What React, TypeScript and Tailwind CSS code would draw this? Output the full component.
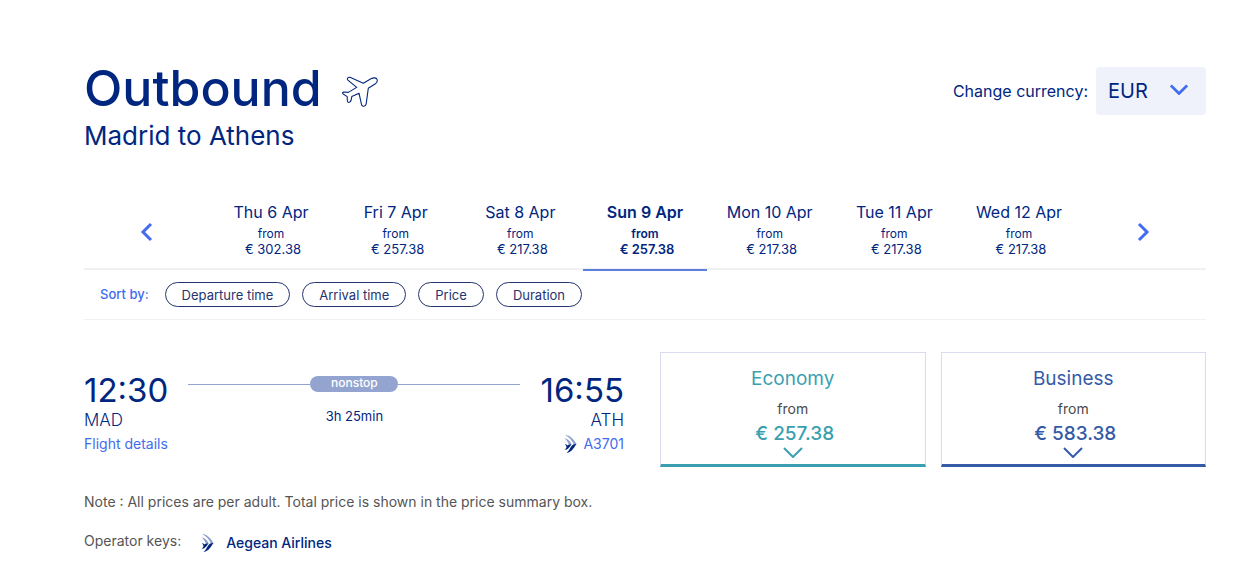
import { useState } from 'react';

interface Fare {
  name: string;
  price: string;
  className: string;
}

const days = [
  { label: 'Thu 6 Apr', price: '302.38' },
  { label: 'Fri 7 Apr', price: '257.38' },
  { label: 'Sat 8 Apr', price: '217.38' },
  { label: 'Sun 9 Apr', price: '257.38' },
  { label: 'Mon 10 Apr', price: '217.38' },
  { label: 'Tue 11 Apr', price: '217.38' },
  { label: 'Wed 12 Apr', price: '217.38' },
];

const sortOptions = ['Departure time', 'Arrival time', 'Price', 'Duration'];

const fares: Fare[] = [
  { name: 'Economy', price: '257.38', className: 'border-b-[#3a9fb0] text-[#3a9fb0]' },
  { name: 'Business', price: '583.38', className: 'border-b-[#355ba8] text-[#355ba8]' },
];

const PlaneIcon = () => (
  <svg width="36" height="32" viewBox="0 0 36 32" fill="none" stroke="#00267f" strokeWidth="1.1" strokeLinejoin="round" aria-hidden="true">
    <path d="M5.6 3.8C4.8 2.6 6.2 1 8 1.3L21.3 7.3L29.4 2.6C31.5 1.4 34.3 1.6 35 3.4C35.6 5 34.8 6.8 33.4 7.8L26.3 12.2L24.2 27.6C24 29.2 22.6 30.6 21.2 30.2C19.8 30 19.4 28.8 19.3 27.6L17 17.2L9.8 20.6L9.2 24C8.8 25.4 7.8 26.6 6.6 26.5C5.4 26.4 5.4 25 5.3 24L5.2 20.6L1.2 18C0.2 17.2 0.4 16 1.8 16L6.3 16.4L14.7 11.4Z" />
  </svg>
);

const AirlineLogo = () => (
  <svg width="13" height="18" viewBox="0 0 13 18" aria-hidden="true">
    <path d="M1 0C6 .2 9.4 4 12.6 9L9.8 9.2C7.8 5.2 5 1.8 1 0Z" fill="#8fa0cf" />
    <path d="M.4 3.2C4 3.6 6 6.2 7.6 9.2L5 9.4C3.8 7 2.4 4.8.4 3.2Z" fill="#8fa0cf" />
    <path d="M12.6 9C10.4 11.6 8.4 17 2.6 18C5.6 15.8 6.2 11 9.8 9.2Z" fill="#00267f" />
    <path d="M7.6 9.2C6.2 11 4.6 14.4.6 15C2.6 13.6 2.4 10.4 5 9.4Z" fill="#00267f" />
    <path d="M1 9C2.2 9.2 3.2 10 4 11L2.8 12.6C2.4 11.2 1.8 10 1 9Z" fill="#00267f" />
  </svg>
);

const DownIcon = ({ className }: { className: string }) => (
  <svg className={className} viewBox="0 0 20 11" fill="none" stroke="currentColor" aria-hidden="true">
    <path d="M1 1L10 10L19 1" />
  </svg>
);

const SideIcon = ({ path }: { path: string }) => (
  <svg width="13" height="20" viewBox="0 0 13 20" fill="none" stroke="#416cf0" strokeWidth="3" aria-hidden="true">
    <path d={path} />
  </svg>
);

const App = () => {
  const [selectedDay, setSelectedDay] = useState(3);
  const [currency, setCurrency] = useState('EUR');

  return (
    <main className="bg-white pt-15 pr-12 pl-21 font-[Inter,'Liberation_Sans',sans-serif] text-[#00267f]">
      <header className="flex items-start justify-between">
        <div>
          <div className="flex items-center gap-5">
            <h1 className="text-[50px] leading-[56px] font-medium">Outbound</h1>
            <span className="pt-2">
              <PlaneIcon />
            </span>
          </div>
          <p className="mt-1 text-[26px] leading-8">Madrid to Athens</p>
        </div>
        <div className="flex items-center gap-2 pt-[7px]">
          <label htmlFor="currency" className="text-base">
            Change currency:
          </label>
          <div className="relative">
            <select
              id="currency"
              value={currency}
              onChange={(event) => setCurrency(event.target.value)}
              className="h-12 w-[110px] appearance-none rounded bg-[#eff2fa] pl-3 text-xl outline-none"
            >
              <option>EUR</option>
              <option>USD</option>
              <option>GBP</option>
            </select>
            <DownIcon className="pointer-events-none absolute top-[17px] right-[18px] h-[11px] w-[18px] stroke-[3] text-[#416cf0]" />
          </div>
        </div>
      </header>

      <nav aria-label="Departure dates" className="mt-[43px] grid grid-cols-9 border-b-2 border-[#f0f0f0]">
        <button type="button" aria-label="Earlier dates" className="flex items-center justify-center">
          <SideIcon path="M11 2L3 10L11 18" />
        </button>
        {days.map((day, index) => (
          <button
            key={day.label}
            type="button"
            onClick={() => setSelectedDay(index)}
            className={`-mb-[3px] border-b-2 pt-[5px] pb-3 text-center ${
              index === selectedDay ? 'border-[#5b7fe0] font-semibold' : 'border-transparent'
            }`}
          >
            <span className="block text-base leading-6">{day.label}</span>
            <span className="mt-0.5 block text-xs leading-4">from</span>
            <span className="block pl-1 text-[13px] leading-[15px]">€ {day.price}</span>
          </button>
        ))}
        <button type="button" aria-label="Later dates" className="flex items-center justify-center">
          <SideIcon path="M2 2L10 10L2 18" />
        </button>
      </nav>

      <div className="flex h-[50px] items-center gap-3 border-b border-[#f0f0f0] pl-4">
        <span className="mr-1 text-[13px] font-medium text-[#416cf0]">Sort by:</span>
        {sortOptions.map((option) => (
          <button
            key={option}
            type="button"
            className="h-[25px] rounded-full border border-[#25346f] px-4 text-[13px] leading-4 text-[#25346f]"
          >
            {option}
          </button>
        ))}
      </div>

      <section className="mt-8 grid grid-cols-[540fr_546fr] gap-9">
        <div className="flex justify-between gap-5 pt-[18px]">
          <div>
            <p className="text-[33px] leading-10">12:30</p>
            <p className="text-[17px] leading-5 font-light">MAD</p>
            <a href="#details" className="mt-1 block text-sm text-[#416cf0]">
              Flight details
            </a>
          </div>
          <div className="flex-1 pt-[6px] text-center">
            <div className="flex items-center">
              <span className="h-px flex-1 bg-[#94a4d0]" />
              <span className="h-4 w-[88px] rounded-full bg-[#94a4d0] text-xs leading-[14px] font-medium text-white">
                nonstop
              </span>
              <span className="h-px flex-1 bg-[#94a4d0]" />
            </div>
            <p className="mt-4 text-[13px] leading-4">3h 25min</p>
          </div>
          <div className="text-right">
            <p className="text-[33px] leading-10">16:55</p>
            <p className="text-[17px] leading-5 font-light">ATH</p>
            <p className="mt-1 flex items-center justify-end gap-1.5 text-sm">
              <AirlineLogo />
              <a href="#flight" className="text-[#416cf0]">
                A3701
              </a>
            </p>
          </div>
        </div>

        <div className="grid grid-cols-2 gap-[15px]">
          {fares.map((fare) => (
            <button
              key={fare.name}
              type="button"
              className={`flex flex-col items-center border border-b-3 border-[#d9dcee] pt-3 pb-1.5 ${fare.className}`}
            >
              <span className="text-[19px] leading-7">{fare.name}</span>
              <span className="mt-1 text-sm leading-6 text-[#4a4a4a]">from</span>
              <span className="pl-1 text-[19px] leading-[26px] font-medium">€ {fare.price}</span>
              <DownIcon className="h-[11px] w-5 stroke-2" />
            </button>
          ))}
        </div>
      </section>

      <footer className="pt-[25px] text-sm text-[#555555]">
        <p>Note : All prices are per adult. Total price is shown in the price summary box.</p>
        <div className="mt-[19px] flex gap-5">
          <span>Operator keys:</span>
          <span className="flex items-center gap-3 pt-0.5 font-medium text-[#00267f]">
            <AirlineLogo />
            Aegean Airlines
          </span>
        </div>
      </footer>
    </main>
  );
};

export default App;
